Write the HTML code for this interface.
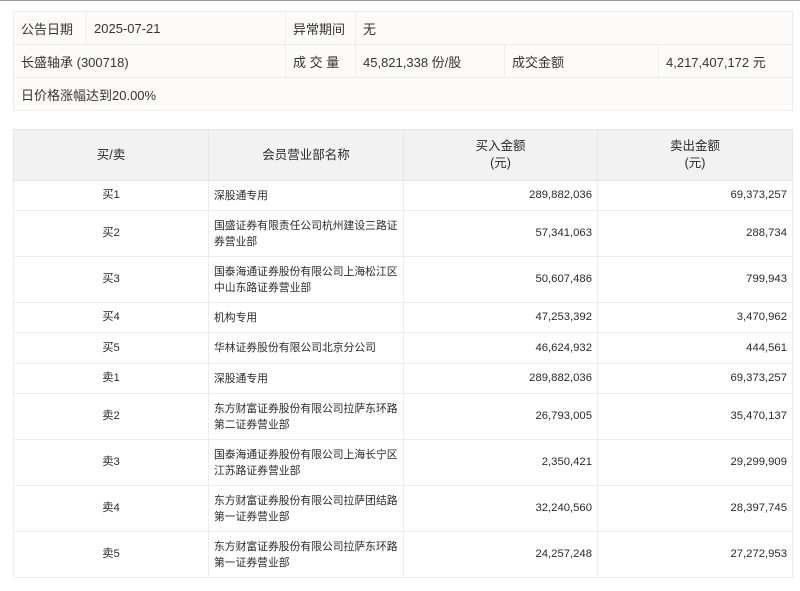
<!DOCTYPE html>
<html><head><meta charset="utf-8"><style>
body{margin:0;width:800px;height:591px;background:#fff;font-family:"Liberation Sans","Noto Sans CJK SC",sans-serif;color:#333;position:relative;overflow:hidden}
.top{position:absolute;left:0;top:0;width:800px;height:1px;background:#999}
table{position:absolute;border-collapse:collapse;table-layout:fixed}
td,th{border:1px solid #ececec;padding:0 5px;box-sizing:border-box;vertical-align:middle}
#info{left:13px;top:11px;width:779px;background:#fcfbf9;font-size:13px}
#info td{height:33px;padding:0 7px}
#list{left:13px;top:129px;width:779px;font-size:11.3px;color:#2a2a2a}
#list th{background:#f2f2f2;font-weight:normal;font-size:12.5px;height:51px;border:1px solid #e6e6e6;line-height:17px;padding:0}
#list td{line-height:15px}
#list td.n{font-size:10.8px;white-space:nowrap;overflow:hidden;line-height:16px}
.c{text-align:center}.r{text-align:right}
</style></head><body>
<div class="top"></div>
<table id="info">
<col style="width:73px"><col style="width:199px"><col style="width:70px"><col style="width:149px"><col style="width:154px"><col style="width:134px">
<tr><td>公告日期</td><td>2025-07-21</td><td>异常期间</td><td colspan="3">无</td></tr>
<tr><td colspan="2">长盛轴承 (300718)</td><td>成 交 量</td><td>45,821,338 份/股</td><td>成交金额</td><td>4,217,407,172 元</td></tr>
<tr><td colspan="6">日价格涨幅达到20.00%</td></tr>
</table>
<table id="list">
<col style="width:195px"><col style="width:195px"><col style="width:194px"><col style="width:195px">
<tr><th>买/卖</th><th>会员营业部名称</th><th>买入金额<br>(元)</th><th>卖出金额<br>(元)</th></tr>
<tr style="height:30px"><td class="c">买1</td><td class="n">深股通专用</td><td class="r">289,882,036</td><td class="r">69,373,257</td></tr>
<tr style="height:46px"><td class="c">买2</td><td class="n">国盛证券有限责任公司杭州建设三路证<br>券营业部</td><td class="r">57,341,063</td><td class="r">288,734</td></tr>
<tr style="height:46px"><td class="c">买3</td><td class="n">国泰海通证券股份有限公司上海松江区<br>中山东路证券营业部</td><td class="r">50,607,486</td><td class="r">799,943</td></tr>
<tr style="height:30px"><td class="c">买4</td><td class="n">机构专用</td><td class="r">47,253,392</td><td class="r">3,470,962</td></tr>
<tr style="height:31px"><td class="c">买5</td><td class="n">华林证券股份有限公司北京分公司</td><td class="r">46,624,932</td><td class="r">444,561</td></tr>
<tr style="height:30px"><td class="c">卖1</td><td class="n">深股通专用</td><td class="r">289,882,036</td><td class="r">69,373,257</td></tr>
<tr style="height:46px"><td class="c">卖2</td><td class="n">东方财富证券股份有限公司拉萨东环路<br>第二证券营业部</td><td class="r">26,793,005</td><td class="r">35,470,137</td></tr>
<tr style="height:46px"><td class="c">卖3</td><td class="n">国泰海通证券股份有限公司上海长宁区<br>江苏路证券营业部</td><td class="r">2,350,421</td><td class="r">29,299,909</td></tr>
<tr style="height:46px"><td class="c">卖4</td><td class="n">东方财富证券股份有限公司拉萨团结路<br>第一证券营业部</td><td class="r">32,240,560</td><td class="r">28,397,745</td></tr>
<tr style="height:46px"><td class="c">卖5</td><td class="n">东方财富证券股份有限公司拉萨东环路<br>第一证券营业部</td><td class="r">24,257,248</td><td class="r">27,272,953</td></tr>
</table>
</body></html>
